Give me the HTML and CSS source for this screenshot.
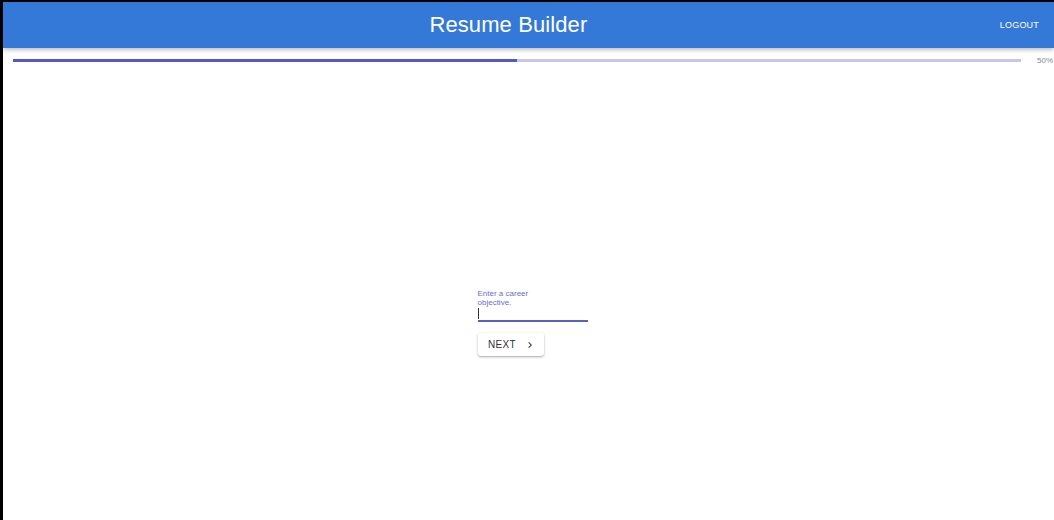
FILE: index.html
```html
<!DOCTYPE html>
<html>
<head>
<meta charset="utf-8">
<link rel="stylesheet" href="styles.css">
</head>
<body>
<div class="frame">
  <header class="appbar">
    <div class="title">Resume Builder</div>
    <button class="logout">LOGOUT</button>
  </header>
  <div class="progress-row">
    <div class="track"><div class="fill" style="width:50%"></div></div>
    <span class="pct">50%</span>
  </div>
  <main class="content">
    <div class="form">
      <div class="field">
        <label class="label">Enter a career objective.</label>
        <div class="input"><span class="caret"></span></div>
      </div>
      <button class="next">NEXT
        <svg width="12" height="12" viewBox="0 0 24 24"><path d="M8.6 16.6L13.2 12 8.6 7.4 10 6l6 6-6 6z" fill="#333"/></svg>
      </button>
    </div>
  </main>
</div>
</body>
</html>
```
FILE: styles.css
```css
html, body { margin: 0; padding: 0; height: 100%; }
body { background: #000; font-family: "Liberation Sans", Arial, sans-serif; overflow: hidden; }
.frame { margin: 2px 0 0 3px; background: #fff; height: 518px; display: flex; flex-direction: column; }
.appbar { height: 46px; background: #3479d7; box-shadow: 0 2px 4px rgba(0,0,0,0.25); display: flex; align-items: center; flex: none; }
.title { flex: 1; text-align: center; color: #fff; font-size: 22px; padding-left: 22px; letter-spacing: 0.1px; }
.logout { background: none; border: 0; color: #fff; font-family: inherit; font-size: 9px; font-weight: 500; padding: 4px 8px; margin-right: 7px; letter-spacing: 0.2px; }
.progress-row { display: flex; align-items: center; padding: 10px 0 0 10px; height: 4px; flex: none; }
.track { width: 1008px; height: 3px; background: #c5c8ea; }
.fill { height: 100%; background: #5557c4; }
.pct { font-size: 8px; color: #888; margin-left: 16px; white-space: nowrap; }
.content { flex: 1; display: flex; justify-content: center; padding-top: 228px; padding-left: 8px; }
.form { width: 110px; }
.field { width: 110px; }
.label { display: block; font-size: 8px; line-height: 8.5px; color: #6a6ed2; width: 60px; }
.input { height: 12px; border-bottom: 2px solid #5b5fc4; padding-top: 1px; }
.caret { display: block; width: 1px; height: 11px; background: #333; }
.next { margin-top: 11px; width: 66px; height: 23px; background: #fff; border: 0; border-radius: 3px; box-shadow: 0 1px 3px rgba(0,0,0,0.25), 0 1px 1px rgba(0,0,0,0.12); font-family: inherit; font-size: 10px; color: #333; letter-spacing: 0.3px; display: flex; align-items: center; justify-content: center; gap: 8px; padding: 0 0 0 3px; }
.next svg { display: block; }
```
